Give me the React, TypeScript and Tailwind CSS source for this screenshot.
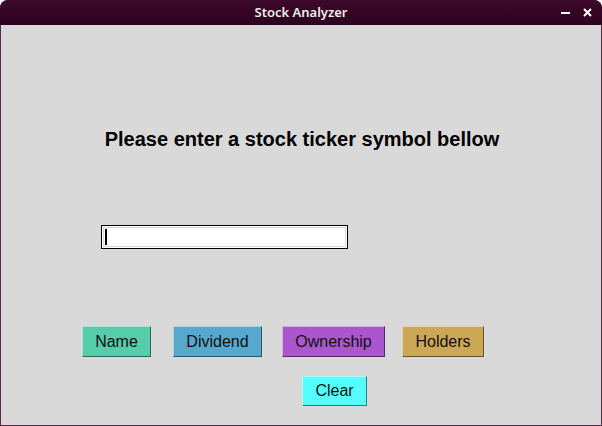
const buttons = [
  { label: "Name", bg: "bg-[#56ccaa]", w: "w-[69px]", ml: "ml-[81px]" },
  { label: "Dividend", bg: "bg-[#56a8cc]", w: "w-[89px]", ml: "ml-[22px]" },
  { label: "Ownership", bg: "bg-[#aa56cc]", w: "w-[103px]", ml: "ml-[20px]" },
  { label: "Holders", bg: "bg-[#cca856]", w: "w-[82px]", ml: "ml-[17px]" },
];

const TkButton = ({ label, className }: { label: string; className: string }) => (
  <button
    className={`flex items-center justify-center border border-t-white/50 border-l-white/50 border-r-black/50 border-b-black/50 text-[16px] text-[#111] ${className}`}
  >
    {label}
  </button>
);

const App = () => {
  return (
    <div
      className="w-[602px] h-[426px] flex flex-col bg-[#5e2750] rounded-t-[8px] overflow-hidden"
      style={{ fontFamily: '"Liberation Sans", Arial, sans-serif' }}
    >
      <div className="h-[25px] shrink-0 relative flex items-center justify-center bg-gradient-to-b from-[#3d0a2a] to-[#2c001e]">
        <span className="text-[13px] font-semibold text-[#eee]" style={{ fontFamily: '"Noto Sans", "DejaVu Sans", sans-serif' }}>
          Stock Analyzer
        </span>
        <div className="absolute right-[10px] top-0 h-full flex items-center gap-[13px]">
          <div className="w-[9px] h-[2px] bg-white" />
          <svg width="9" height="9" viewBox="0 0 9 9">
            <path d="M1 1 L8 8 M8 1 L1 8" stroke="white" strokeWidth="2" />
          </svg>
        </div>
      </div>
      <div className="flex-1 mx-[1px] mb-[1px] bg-[#d9d9d9] flex flex-col">
        <h1 className="mt-[103px] text-center text-[20px] leading-[23px] font-bold text-black pl-[2px]">
          Please enter a stock ticker symbol bellow
        </h1>
        <div className="mt-[74px] ml-[100px] w-[247px] h-[24px] border border-black bg-white p-[1px]">
          <div className="h-full border border-[#d9d9d9] flex items-center pl-[1px]">
            <div className="w-[2px] h-[16px] bg-black" />
          </div>
        </div>
        <div className="mt-[77px] flex">
          {buttons.map((b) => (
            <TkButton key={b.label} label={b.label} className={`${b.bg} ${b.w} ${b.ml} h-[31px]`} />
          ))}
        </div>
        <div className="mt-[19px] flex">
          <TkButton label="Clear" className="bg-[#56ffff] w-[65px] h-[30px] ml-[301px]" />
        </div>
      </div>
    </div>
  );
};

export default App;
